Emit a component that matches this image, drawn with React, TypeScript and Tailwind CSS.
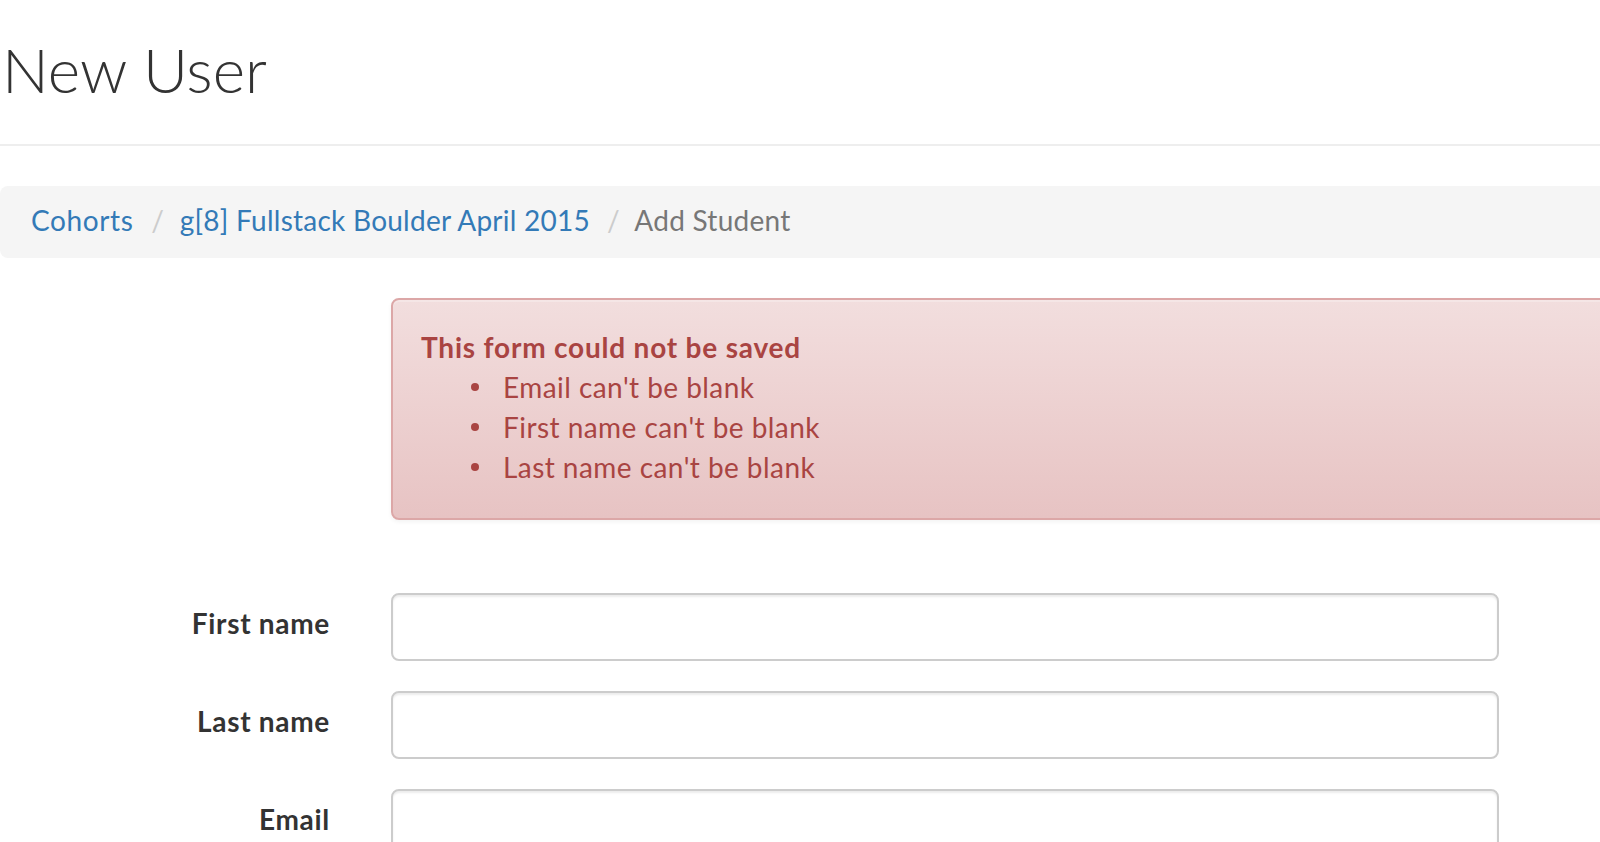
import React from "react";

/* ─── Form row ─────────────────────────────────────────── */
function FieldRow({ label }: { label: string }) {
  return (
    <div className="flex items-start mb-[30px]">
      <label className="w-[330px] shrink-0 text-right pt-[10px] text-[28px] leading-[40px] font-bold tracking-[0.7px] text-[#333]">
        {label}
      </label>
      <div className="ml-[61px] w-[1108px]">
        <input
          type="text"
          className="block w-full h-[68px] rounded-[8px] border-2 border-[#ccc] bg-white px-[24px] text-[28px] outline-none shadow-[inset_0_2px_2px_rgba(0,0,0,0.075)]"
        />
      </div>
    </div>
  );
}

/* ─── Page ─────────────────────────────────────────────── */
export default function App() {
  const errors = [
    "Email can't be blank",
    "First name can't be blank",
    "Last name can't be blank",
  ];

  return (
    <div className="w-[1600px] h-[842px] overflow-hidden bg-white font-['Lato',sans-serif] text-[#333]">
      {/* Page header */}
      <div className="pt-[35px] pb-[41px] border-b-2 border-[#eee]">
        <h1 className="text-[62px] leading-[68px] font-light text-[#333] pl-[2px]">New User</h1>
      </div>

      {/* Breadcrumb */}
      <div className="mt-[40px] w-[1700px] h-[72px] rounded-[8px] bg-[#f5f5f5] px-[31px] pb-[4px] flex items-center text-[28px] leading-[40px] tracking-[0.25px]">
        <a className="text-[#337ab7] tracking-[0.6px]">Cohorts</a>
        <span className="pl-[18px] pr-[8px] text-[#ccc]">/&nbsp;</span>
        <a className="text-[#337ab7]">g[8] Fullstack Boulder April 2015</a>
        <span className="pl-[17px] pr-[7px] text-[#ccc]">/&nbsp;</span>
        <span className="text-[#777]">Add Student</span>
      </div>

      {/* Error alert */}
      <div className="mt-[40px] ml-[391px] w-[1400px] rounded-[8px] border-2 border-[#dca7a7] bg-linear-to-b from-[#f2dede] to-[#e7c3c3] pt-[27px] pb-[31px] px-[28px] text-[#a94442] text-[28px] leading-[40px] shadow-[inset_0_2px_0_rgba(255,255,255,0.25),0_2px_4px_rgba(0,0,0,0.05)]">
        <div className="font-bold tracking-[0.8px]">This form could not be saved</div>
        <ul className="tracking-[0.45px]">
          {errors.map((e) => (
            <li key={e} className="flex items-center">
              <span className="ml-[50px] w-[8px] h-[8px] rounded-full bg-[#a94442] shrink-0" />
              <span className="ml-[24px]">{e}</span>
            </li>
          ))}
        </ul>
      </div>

      {/* Form */}
      <form className="mt-[73px]">
        <FieldRow label="First name" />
        <FieldRow label="Last name" />
        <FieldRow label="Email" />
      </form>
    </div>
  );
}
